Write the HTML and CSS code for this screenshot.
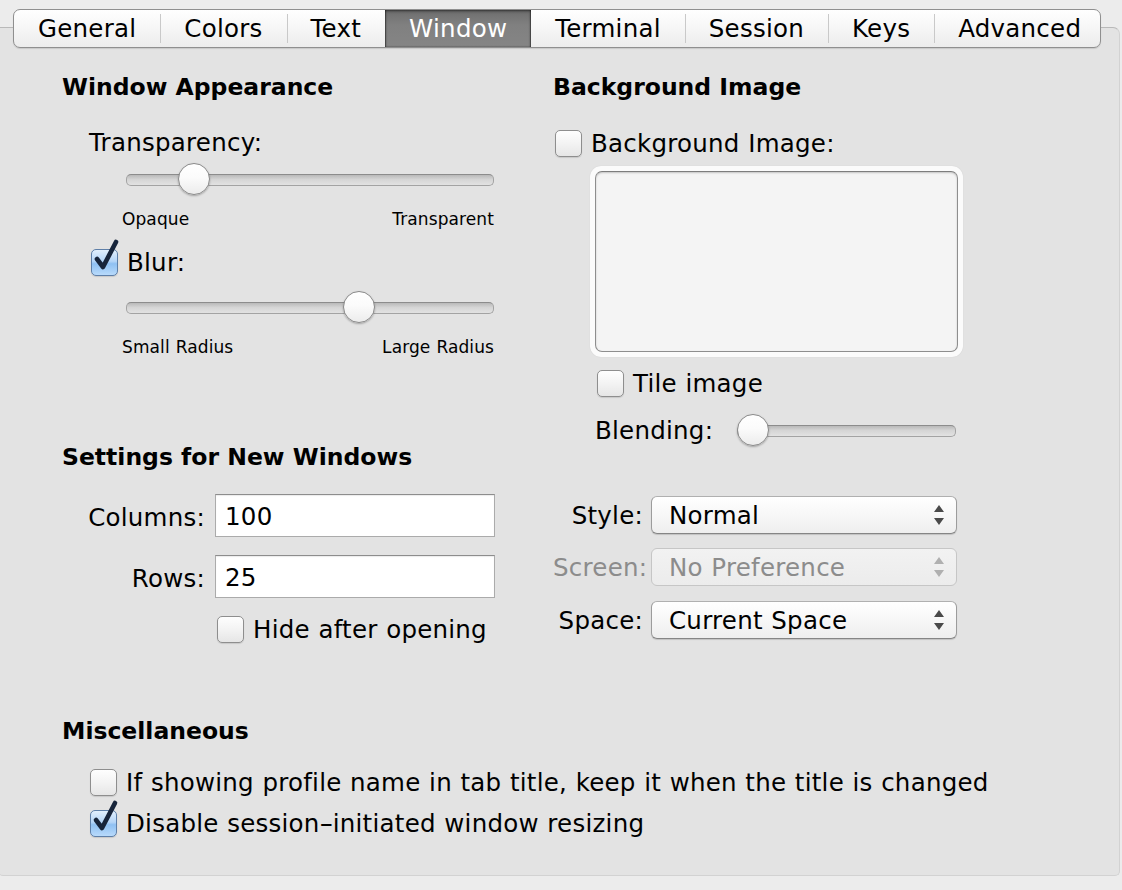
FILE: index.html
```html
<!DOCTYPE html>
<html>
<head>
<meta charset="utf-8">
<link rel="stylesheet" href="styles.css">
</head>
<body>
<div class="panel">
  <div class="tabs">
    <div class="tab">General</div>
    <div class="tab">Colors</div>
    <div class="tab">Text</div>
    <div class="tab sel">Window</div>
    <div class="tab after-sel">Terminal</div>
    <div class="tab">Session</div>
    <div class="tab">Keys</div>
    <div class="tab">Advanced</div>
  </div>
  <div class="content">
    <div class="cols">
      <div class="col col-left">
        <h2 class="heading">Window Appearance</h2>
        <div class="label-line">Transparency:</div>
        <div class="slider slider-main"><div class="knob" style="margin-left:52px"></div></div>
        <div class="ticks"><span>Opaque</span><span>Transparent</span></div>
        <div class="check-row blur-row">
          <span class="cb checked"><svg class="tick" width="30" height="36" viewBox="0 0 30 36"><path d="M6 20 L12 28 L25 3" fill="none" stroke="#17243a" stroke-width="4.6" stroke-linecap="round" stroke-linejoin="round"/></svg></span>
          <span>Blur:</span>
        </div>
        <div class="slider slider-blur"><div class="knob" style="margin-left:217px"></div></div>
        <div class="ticks ticks-blur"><span>Small Radius</span><span>Large Radius</span></div>

        <h2 class="heading heading-new">Settings for New Windows</h2>
        <div class="form-row">
          <label class="form-label">Columns:</label>
          <div class="field">100</div>
        </div>
        <div class="form-row form-row-2">
          <label class="form-label">Rows:</label>
          <div class="field">25</div>
        </div>
        <div class="check-row hide-row">
          <span class="cb"></span>
          <span>Hide after opening</span>
        </div>
      </div>

      <div class="col col-right">
        <h2 class="heading">Background Image</h2>
        <div class="check-row bg-row">
          <span class="cb"></span>
          <span>Background Image:</span>
        </div>
        <div class="well"><div class="well-inner"></div></div>
        <div class="check-row tile-row">
          <span class="cb"></span>
          <span>Tile image</span>
        </div>
        <div class="blend-row">
          <span class="blend-label">Blending:</span>
          <div class="slider slider-blend"><div class="knob"></div></div>
        </div>

        <div class="pop-row pop-style">
          <span class="pop-label">Style:</span>
          <div class="popup"><span>Normal</span>
            <svg class="arrows" width="12" height="24" viewBox="0 0 12 24"><path d="M6 2 L11 9 L1 9 Z M1 15 L11 15 L6 22 Z" fill="#4a4a4a"/></svg>
          </div>
        </div>
        <div class="pop-row pop-screen disabled">
          <span class="pop-label">Screen:</span>
          <div class="popup"><span>No Preference</span>
            <svg class="arrows" width="12" height="24" viewBox="0 0 12 24"><path d="M6 2 L11 9 L1 9 Z M1 15 L11 15 L6 22 Z" fill="#b0b0b0"/></svg>
          </div>
        </div>
        <div class="pop-row pop-space">
          <span class="pop-label">Space:</span>
          <div class="popup"><span>Current Space</span>
            <svg class="arrows" width="12" height="24" viewBox="0 0 12 24"><path d="M6 2 L11 9 L1 9 Z M1 15 L11 15 L6 22 Z" fill="#4a4a4a"/></svg>
          </div>
        </div>
      </div>
    </div>

    <section class="misc">
      <h2 class="heading">Miscellaneous</h2>
      <div class="check-row misc-row-1">
        <span class="cb"></span>
        <span>If showing profile name in tab title, keep it when the title is changed</span>
      </div>
      <div class="check-row misc-row-2">
        <span class="cb checked"><svg class="tick" width="30" height="36" viewBox="0 0 30 36"><path d="M6 20 L12 28 L25 3" fill="none" stroke="#17243a" stroke-width="4.6" stroke-linecap="round" stroke-linejoin="round"/></svg></span>
        <span>Disable session<span class="dash">-</span>initiated window resizing</span>
      </div>
    </section>
  </div>
</div>
</body>
</html>
```

FILE: styles.css
```css
* { box-sizing: border-box; }

html, body {
  margin: 0;
  padding: 0;
  height: 890px;
  overflow: hidden;
  background: #ececec;
}

body {
  font-family: "DejaVu Sans", "Liberation Sans", sans-serif;
  font-size: 24.5px;
  letter-spacing: 0.25px;
  word-spacing: 0.5px;
  color: #000;
}

.panel {
  margin-top: 27px;
  margin-left: -2px;
  width: 1122px;
  height: 849px;
  background: #e3e3e3;
  border: 1px solid #d2d2d2;
  border-top-color: #b9b9b9;
  border-radius: 0 7px 5px 5px;
}

/* ---------- tabs ---------- */
.tabs {
  display: flex;
  width: 1088px;
  height: 39px;
  margin-top: -19px;
  margin-left: 14px;
  border: 1px solid #8f8f8f;
  border-radius: 7px;
  background: linear-gradient(#ffffff, #f6f6f6 50%, #ececec);
  box-shadow: 0 1px 1px rgba(0, 0, 0, 0.12);
  overflow: hidden;
}

.tab {
  position: relative;
  padding: 0 24px;
  line-height: 37px;
  white-space: nowrap;
}

.tab + .tab::before {
  content: "";
  position: absolute;
  left: 0;
  top: 4px;
  bottom: 4px;
  width: 1px;
  background: #c9c9c9;
}

.tab.after-sel::before { display: none; }

.tab.sel {
  color: #fff;
  background: linear-gradient(#6d6d6d, #808080 40%, #858585);
  box-shadow: inset 0 1px 3px rgba(0, 0, 0, 0.55), inset 1px 0 1px rgba(0,0,0,.35), inset -1px 0 1px rgba(0,0,0,.35);
}

.tab.sel::before { display: none; }

/* ---------- content ---------- */
.content {
  padding: 24px 0 0 63px;
}

.cols {
  display: grid;
  grid-template-columns: 491px 500px;
  align-items: start;
}

.heading {
  margin: 0;
  height: 30px;
  line-height: 30px;
  font-size: 23.5px;
  font-weight: bold;
  letter-spacing: 0;
  word-spacing: 0;
  white-space: nowrap;
}

.label-line {
  margin-top: 26px;
  height: 30px;
  line-height: 30px;
  padding-left: 27px;
}

/* sliders */
.slider {
  position: relative;
  height: 32px;
}

.slider::before {
  content: "";
  position: absolute;
  left: 0;
  right: 0;
  top: 11px;
  height: 10px;
  border-radius: 5px;
  border: 1px solid #a3a3a3;
  border-top-color: #8c8c8c;
  background: linear-gradient(#b9b9b9, #d5d5d5 45%, #e2e2e2);
}

.knob {
  position: relative;
  width: 32px;
  height: 32px;
  border-radius: 50%;
  border: 1px solid #8a8a8a;
  background: linear-gradient(#ffffff, #fbfbfb 45%, #ececec);
  box-shadow: 0 1px 2px rgba(0, 0, 0, 0.28);
}

.slider-main {
  margin-top: 5px;
  margin-left: 64px;
  width: 368px;
}

.slider-blur {
  margin-top: 14px;
  margin-left: 64px;
  width: 368px;
}

.ticks {
  margin-top: 13px;
  margin-left: 60px;
  width: 372px;
  display: flex;
  justify-content: space-between;
  font-size: 17px;
  letter-spacing: 0.1px;
  height: 22px;
  line-height: 22px;
}

/* checkboxes */
.check-row {
  display: flex;
  align-items: center;
  gap: 9px;
  height: 30px;
  white-space: nowrap;
}

.cb {
  position: relative;
  flex: none;
  width: 27px;
  height: 27px;
  border-radius: 5px;
  border: 1px solid #8e8e8e;
  background: linear-gradient(#fefefe, #f3f3f3 50%, #e6e6e6);
  box-shadow: 0 1px 1px rgba(0, 0, 0, 0.12);
}

.cb.checked {
  border-color: #5e7fa8;
  background: linear-gradient(#e2effc, #b5d5f7 45%, #8fc0f2 55%, #b8dafb);
}

.tick {
  position: absolute;
  left: -1px;
  top: -11px;
  overflow: visible;
}

.dash {
  display: inline-block;
  margin: 0 2px;
  transform: scaleX(1.6);
}

.blur-row {
  margin-top: 17px;
  padding-left: 29px;
}

.heading-new {
  margin-top: 84px;
}

/* form rows */
.form-row {
  display: flex;
  align-items: center;
  gap: 10px;
  margin-top: 22px;
  height: 43px;
}

.form-row-2 {
  margin-top: 18px;
}

.form-label {
  width: 143px;
  text-align: right;
  padding-top: 4px;
}

.field {
  width: 280px;
  height: 43px;
  line-height: 43px;
  padding-left: 9px;
  background: #fff;
  border: 1px solid #ababab;
  border-top-color: #8d8d8d;
  box-shadow: inset 0 1px 1px rgba(0, 0, 0, 0.08);
}

.hide-row {
  margin-top: 16px;
  padding-left: 155px;
}

/* right column */
.bg-row {
  margin-top: 26px;
  padding-left: 2px;
}

.well {
  margin-top: 8px;
  margin-left: 37px;
  width: 373px;
  height: 191px;
  padding: 5px;
  border-radius: 11px;
  background: #fbfbfb;
  box-shadow: 0 0 1px rgba(0, 0, 0, 0.15);
}

.well-inner {
  height: 100%;
  border: 1px solid #8e8e8e;
  border-top-color: #7d7d7d;
  border-radius: 7px;
  background: #f4f4f4;
  box-shadow: inset 0 1px 2px rgba(0, 0, 0, 0.2);
}

.tile-row {
  margin-top: 11px;
  padding-left: 44px;
}

.blend-row {
  display: flex;
  align-items: center;
  margin-top: 16px;
  padding-left: 42px;
  height: 32px;
}

.blend-label {
  width: 142px;
}

.slider-blend {
  width: 219px;
}

/* popups */
.pop-row {
  display: flex;
  align-items: center;
  gap: 8px;
  height: 38px;
}

.pop-style { margin-top: 50px; }
.pop-screen { margin-top: 14px; }
.pop-space { margin-top: 15px; }

.pop-label {
  width: 90px;
  text-align: right;
  white-space: nowrap;
}

.popup {
  display: flex;
  align-items: center;
  justify-content: space-between;
  width: 306px;
  height: 38px;
  padding: 0 11px 0 17px;
  border: 1px solid #9c9c9c;
  border-top-color: #b0b0b0;
  border-bottom-color: #858585;
  border-radius: 6px;
  background: linear-gradient(#ffffff, #f7f7f7 50%, #eeeeee);
  box-shadow: 0 1px 1px rgba(0, 0, 0, 0.15);
}

.disabled .pop-label,
.disabled .popup {
  color: #8c8c8c;
}

.disabled .popup {
  border-color: #c6c6c6;
  background: linear-gradient(#f2f2f2, #ececec);
  box-shadow: none;
}

/* misc */
.misc {
  margin-top: 72px;
}

.misc-row-1 {
  margin-top: 21px;
  padding-left: 28px;
}

.misc-row-2 {
  margin-top: 11px;
  padding-left: 28px;
}
```
